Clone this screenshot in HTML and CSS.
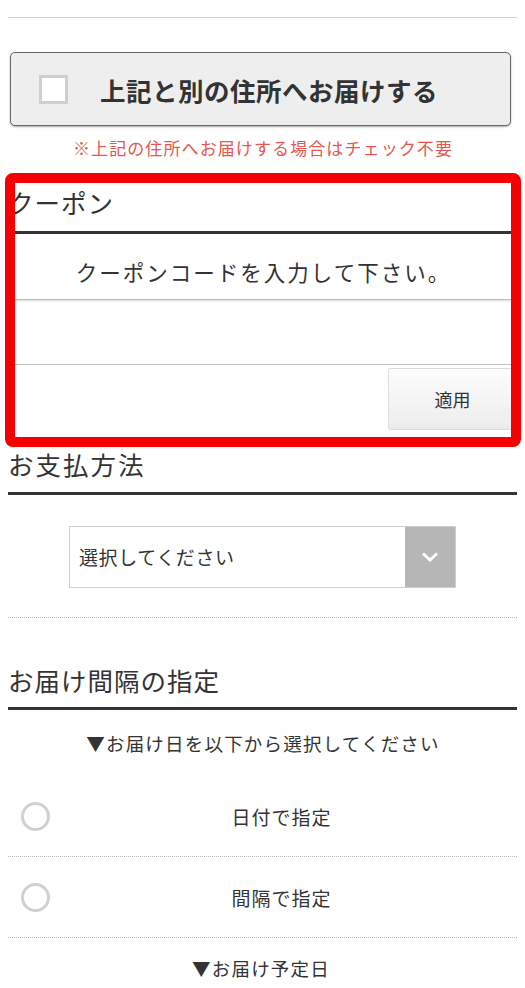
FILE: index.html
```html
<!DOCTYPE html>
<html lang="ja">
<head>
	<meta charset="utf-8">
	<meta name="viewport" content="width=device-width, initial-scale=1">
	<title>ご注文手続き</title>
	<link rel="stylesheet" href="styles.css">
</head>
<body>
  <main class="page">

    <section class="other-address">
      <label class="check-btn">
        <span class="check-box"></span>
        <span class="check-text">上記と別の住所へお届けする</span>
      </label>
      <p class="notice">※上記の住所へお届けする場合はチェック不要</p>
    </section>

    <section class="coupon">
      <h2 class="heading">クーポン</h2>
      <div class="coupon-input">クーポンコードを入力して下さい。</div>
      <div class="coupon-blank"></div>
      <div class="coupon-actions">
        <button class="apply-btn" type="button">適用</button>
      </div>
      <!-- highlight frame drawn over the coupon block -->
      <div class="highlight"></div>
    </section>

    <section class="payment">
      <h2 class="heading">お支払方法</h2>
      <div class="select">
        <span class="select-text">選択してください</span>
        <span class="select-arrow">
          <svg width="20" height="12" viewBox="0 0 20 12"><polyline points="3,2.5 10,9 17,2.5" fill="none" stroke="#fff" stroke-width="3"/></svg>
        </span>
      </div>
    </section>

    <section class="interval">
      <h2 class="heading">お届け間隔の指定</h2>
      <p class="guide">▼お届け日を以下から選択してください</p>
      <div class="radio-row">
        <span class="radio"></span>
        <span class="radio-label">日付で指定</span>
      </div>
      <div class="radio-row">
        <span class="radio"></span>
        <span class="radio-label">間隔で指定</span>
      </div>
      <p class="guide guide-last">▼お届け予定日</p>
    </section>

  </main>
</body>
</html>
```

FILE: styles.css
```css
html body{
  margin: 0;
  background: #fff;
  color: #333;
  font-family: "Noto Sans CJK JP", "Noto Sans", sans-serif;
}

.page{
  padding: 0 8px;
}

p{
  margin: 0;
}

/* other address */

.other-address{
  border-top: 1px solid #d4d4d4;
  margin-top: 17px;
  padding-top: 34px;
}

.check-btn{
  display: flex;
  align-items: center;
  box-sizing: border-box;
  height: 74px;
  margin: 0 6px 0 2px;
  padding-left: 28px;
  background: #eeeeee;
  border: 1.5px solid #666;
  border-radius: 5px;
  box-shadow: 0 1px 2px rgba(0,0,0,0.35);
}

.check-box{
  width: 23px;
  height: 23px;
  border: 3px solid #cfcfcf;
  background: #fff;
  flex-shrink: 0;
}

.check-text{
  margin-left: 32px;
  font-size: 25.5px;
  font-weight: bold;
  letter-spacing: 0.5px;
  color: #333;
}

.notice{
  margin-top: 11px;
  padding-left: 1px;
  text-align: center;
  font-size: 17px;
  line-height: 22px;
  letter-spacing: 1.1px;
  color: #e5564f;
}

/* headings */

.heading{
  margin: 0;
  font-size: 25.5px;
  font-weight: normal;
  line-height: 36px;
  letter-spacing: 1px;
  border-bottom: 3px solid #333;
}

/* coupon */

.coupon{
  position: relative;
  margin-top: 25px;
}

.coupon .heading{
  padding-bottom: 11px;
}

.coupon-input{
  height: 39px;
  padding-top: 26px;
  padding-left: 2px;
  font-size: 21.5px;
  line-height: 24px;
  letter-spacing: 2px;
  text-align: center;
  border-bottom: 1px solid #bbb;
  box-shadow: 0 1px 2px rgba(0,0,0,0.15);
}

.coupon-blank{
  height: 64px;
  border-bottom: 1px solid #c4c4c4;
}

.coupon-actions{
  display: flex;
  justify-content: flex-end;
  padding-top: 3px;
}

.apply-btn{
  width: 129px;
  height: 62px;
  font-family: inherit;
  font-size: 18px;
  color: #333;
  background: linear-gradient(#fdfdfd, #ececec);
  border: 1px solid #dcdcdc;
  border-radius: 2px;
}

.highlight{
  position: absolute;
  top: -11px;
  left: -3px;
  right: -4px;
  bottom: -17px;
  border: 10px solid #f50000;
  border-radius: 8px;
}

/* payment */

.payment{
  margin-top: 16px;
  padding-bottom: 29px;
  border-bottom: 1px dotted #bbb;
}

.payment .heading{
  padding-bottom: 10px;
  letter-spacing: 2px;
}

.select{
  display: flex;
  width: 385px;
  height: 60px;
  margin: 31px auto 0;
  border: 1px solid #cfcfcf;
}

.select-text{
  flex: 1;
  padding-left: 9px;
  font-size: 19px;
  line-height: 60px;
  letter-spacing: 0.6px;
}

.select-arrow{
  display: flex;
  align-items: center;
  justify-content: center;
  width: 50px;
  background: #b6b6b6;
}

/* interval */

.interval{
  margin-top: 44px;
}

.interval .heading{
  padding-bottom: 9px;
}

.guide{
  margin-top: 19px;
  padding-left: 1px;
  text-align: center;
  font-size: 18.5px;
  line-height: 28px;
  letter-spacing: 1.2px;
}

.guide-last{
  margin-top: 16px;
  padding-right: 4px;
}

.radio-row{
  display: flex;
  align-items: center;
  height: 80px;
  border-bottom: 1px dotted #bbb;
}

.radio-row:first-of-type{
  margin-top: 19px;
}

.radio{
  width: 23px;
  height: 23px;
  margin-left: 13px;
  border: 3px solid #d0d0d0;
  border-radius: 50%;
  flex-shrink: 0;
}

.radio-label{
  flex: 1;
  padding-right: 4px;
  text-align: center;
  font-size: 19px;
  letter-spacing: 1px;
}
```
